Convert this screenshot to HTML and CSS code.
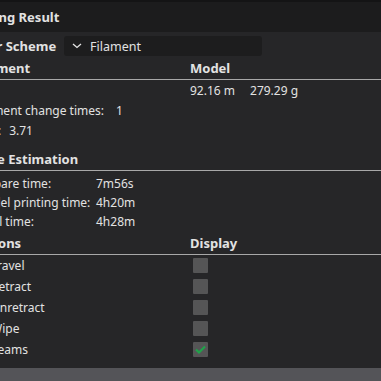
FILE: index.html
```html
<!DOCTYPE html>
<html>
<head>
<meta charset="utf-8">
<link rel="stylesheet" href="styles.css">
</head>
<body>
<div class="panel">
  <div class="titlebar"><span class="title">Slicing Result</span></div>
  <div class="content">
    <div class="scheme-row">
      <span class="bold label-scheme">Color Scheme</span>
      <div class="dropdown">
        <svg class="chev" width="10" height="6" viewBox="0 0 10 6"><path d="M1 1 L5 4.5 L9 1" fill="none" stroke="#e6e6e6" stroke-width="1.3"/></svg>
        <span>Filament</span>
      </div>
    </div>
    <div class="head-row">
      <span class="bold col1">Filament</span>
      <span class="bold col2">Model</span>
    </div>
    <div class="rule"></div>
    <div class="row r-model">
      <span class="col1"></span>
      <span class="col2">92.16 m<span class="gap"></span>279.29 g</span>
    </div>
    <div class="row r-change">Filament change times:<span class="v1">1</span></div>
    <div class="row r-cost">Cost:<span class="v2">3.71</span></div>

    <div class="head-row h-time"><span class="bold">Time Estimation</span></div>
    <div class="rule"></div>
    <div class="time-grid">
      <span>Prepare time:</span><span>7m56s</span>
      <span>Model printing time:</span><span>4h20m</span>
      <span>Total time:</span><span>4h28m</span>
    </div>

    <div class="head-row h-opt">
      <span class="bold col1 opt-head">Options</span>
      <span class="bold col2">Display</span>
    </div>
    <div class="rule"></div>
    <div class="options">
      <div class="opt"><span class="oname">Travel</span><span class="cb"></span></div>
      <div class="opt"><span class="oname">Retract</span><span class="cb"></span></div>
      <div class="opt"><span class="oname">Unretract</span><span class="cb"></span></div>
      <div class="opt"><span class="oname">Wipe</span><span class="cb"></span></div>
      <div class="opt"><span class="oname">Seams</span><span class="cb checked"><svg width="15" height="15" viewBox="0 0 15 15"><path d="M3 7.5 L6 10.5 L12 4.5" fill="none" stroke="#1fa34a" stroke-width="2.2"/></svg></span></div>
    </div>
  </div>
  <div class="bottom"></div>
</div>
</body>
</html>
```
FILE: styles.css
```css
html, body {
  margin: 0;
  padding: 0;
  background: #262628;
  width: 381px;
  height: 381px;
  overflow: hidden;
}
body {
  font-family: "Noto Sans", "Open Sans", sans-serif;
  font-size: 12px;
  color: #e2e2e2;
}
.panel {
  width: 381px;
  height: 381px;
  display: flex;
  flex-direction: column;
  overflow: hidden;
}
.titlebar {
  height: 30px;
  background: #1c1c1d;
  border-top: 2px solid #141415;
  display: flex;
  align-items: center;
  margin-left: -27px;
}
.title {
  font-weight: 700;
  font-size: 13px;
}
.bold { font-weight: 700; font-size: 13px; }
.content {
  flex: 1;
  margin-left: -27px;
  display: flex;
  flex-direction: column;
}
.scheme-row {
  height: 24px;
  margin-top: 2px;
  display: flex;
  align-items: center;
}
.label-scheme { width: 96px; margin-left: -5px; }
.dropdown {
  width: 198px;
  height: 20px;
  background: #1d1d1e;
  border-radius: 3px;
  display: flex;
  align-items: center;
  padding-left: 8px;
  box-sizing: border-box;
  font-size: 12.5px;
}
.chev { margin-right: 8px; }
.head-row {
  display: flex;
  height: 20px;
  align-items: center;
}
.col1 { width: 217px; }
.opt-head { width: 220px; margin-left: -3px; }
.rule {
  height: 1px;
  background: #a8a8a8;
  margin-top: 1px;
}
.row {
  height: 20px;
  display: flex;
  align-items: center;
}
.r-model { margin-top: 0; }
.gap { display: inline-block; width: 15px; }
.v1 { margin-left: 12px; }
.v2 { margin-left: 8px; }
.h-time { margin-top: 9px; }
.time-grid {
  display: grid;
  grid-template-columns: 121px auto;
  padding-left: 2px;
  grid-auto-rows: 19px;
  align-items: center;
  margin-top: 3px;
}
.h-opt { margin-top: 2px; }
.options {
  display: flex;
  flex-direction: column;
  margin-top: 0;
}
.opt {
  height: 21px;
  display: flex;
  align-items: center;
}
.oname { width: 193px; padding-left: 18px; box-sizing: border-box; }
.cb {
  width: 15px;
  height: 15px;
  background: #555556;
  border-radius: 1px;
  margin-left: 27px;
  display: flex;
}
.bottom {
  height: 13px;
  background: #545458;
}
```
